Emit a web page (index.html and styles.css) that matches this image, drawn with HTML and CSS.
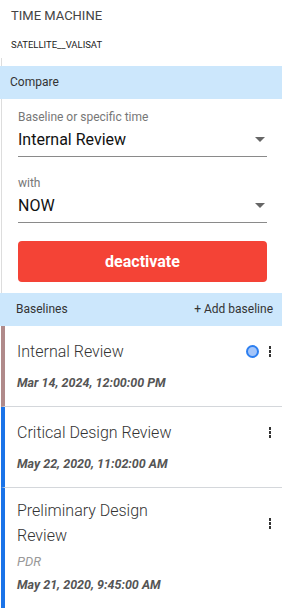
FILE: index.html
```html
<!DOCTYPE html>
<html lang="en">
<head>
    <meta charset="UTF-8">
    <meta name="viewport" content="width=device-width, initial-scale=1.0">
    <title>Time Machine</title>
    <link rel="stylesheet" href="styles.css">
</head>
<body>
    <div class="header">
        <div class="title">TIME MACHINE</div>
        <div class="subtitle">SATELLITE__VALISAT</div>
    </div>

    <div class="panel">
        <div class="band">Compare</div>

        <div class="compare">
            <div class="field">
                <label>Baseline or specific time</label>
                <div class="select">
                    <span>Internal Review</span>
                    <span class="caret"></span>
                </div>
            </div>
            <div class="field">
                <label>with</label>
                <div class="select">
                    <span>NOW</span>
                    <span class="caret"></span>
                </div>
            </div>
            <button class="deactivate">deactivate</button>
        </div>

        <div class="band band-split">
            <span class="band-title">Baselines</span>
            <span class="add">+ Add baseline</span>
        </div>

        <div class="baseline active">
            <div class="baseline-body">
                <div class="baseline-name">Internal Review</div>
                <div class="baseline-date">Mar 14, 2024, 12:00:00 PM</div>
            </div>
            <div class="baseline-tools">
                <span class="dot"></span>
                <span class="kebab"><i></i><i></i><i></i></span>
            </div>
        </div>

        <div class="baseline">
            <div class="baseline-body">
                <div class="baseline-name">Critical Design Review</div>
                <div class="baseline-date">May 22, 2020, 11:02:00 AM</div>
            </div>
            <div class="baseline-tools">
                <span class="kebab"><i></i><i></i><i></i></span>
            </div>
        </div>

        <div class="baseline tall">
            <div class="baseline-body">
                <div class="baseline-name">Preliminary Design Review</div>
                <div class="baseline-desc">PDR</div>
                <div class="baseline-date">May 21, 2020, 9:45:00 AM</div>
            </div>
            <div class="baseline-tools tools-mid">
                <span class="kebab"><i></i><i></i><i></i></span>
            </div>
        </div>
    </div>
</body>
</html>
```

FILE: styles.css
```css
body {
    margin: 0;
    font-family: Roboto, "Noto Sans", Arial, sans-serif;
    color: #333;
    background: #fff;
}
.header {
    padding: 7px 11px 0;
    height: 51px;
}
.title {
    font-size: 13px;
    line-height: 18px;
    color: #444;
}
.subtitle {
    font-size: 9.5px;
    margin-top: 14px;
    color: #222;
}
.panel {
    border-left: 1px solid #ddd;
    margin-left: 1px;
    padding-top: 8px;
}
.band {
    background-color: #cce7fc;
    height: 33px;
    line-height: 33px;
    font-size: 12px;
    color: #333;
    padding: 0 10px;
    margin-left: -2px;
}
.band-split {
    display: flex;
    justify-content: space-between;
    padding: 0 9px 0 16px;
}
.compare {
    padding: 10px 15px 11px 16px;
}
.field {
    margin-bottom: 18px;
}
.field label {
    display: block;
    font-size: 12px;
    color: #777;
    line-height: 16px;
}
.select {
    display: flex;
    justify-content: space-between;
    align-items: center;
    font-size: 16px;
    color: #111;
    height: 28px;
    padding-bottom: 3px;
    border-bottom: 1px solid #8a8a8a;
}
.caret {
    width: 0;
    height: 0;
    border-left: 5px solid transparent;
    border-right: 5px solid transparent;
    border-top: 5px solid #666;
    margin-right: 2px;
}
.deactivate {
    display: block;
    width: 100%;
    height: 41px;
    margin-top: 1px;
    border: none;
    border-radius: 4px;
    background-color: #f44336;
    color: #fff;
    font-family: inherit;
    font-size: 16px;
    font-weight: bold;
}
.baseline {
    display: flex;
    border-left: 4px solid #1a73e8;
    border-bottom: 1px solid #d4d7db;
    margin-left: -1px;
    padding: 13px 11px 16px 12px;
}
.baseline.active {
    border-left-color: #b08a8a;
}
.baseline.tall {
    padding-top: 10px;
    border-bottom: none;
}
.baseline-body {
    flex: 1;
}
.baseline-name {
    font-size: 16px;
    line-height: 25px;
    color: #333;
    font-weight: 300;
    max-width: 175px;
}
.baseline-desc {
    font-size: 13px;
    font-style: italic;
    color: #999;
    margin-top: 6px;
}
.baseline-date {
    font-size: 12.5px;
    font-style: italic;
    font-weight: bold;
    color: #555;
    margin-top: 11px;
}
.baseline-desc + .baseline-date {
    margin-top: 8px;
}
.baseline-tools {
    display: flex;
    align-items: center;
    gap: 10px;
    height: 25px;
}
.tools-mid {
    margin-top: 13px;
}
.dot {
    width: 9px;
    height: 9px;
    border-radius: 50%;
    background: #a4c5f9;
    border: 2px solid #2d7ff0;
}
.kebab {
    display: flex;
    flex-direction: column;
    gap: 1.5px;
}
.kebab i {
    width: 2.5px;
    height: 2.5px;
    background: #333;
}
```
